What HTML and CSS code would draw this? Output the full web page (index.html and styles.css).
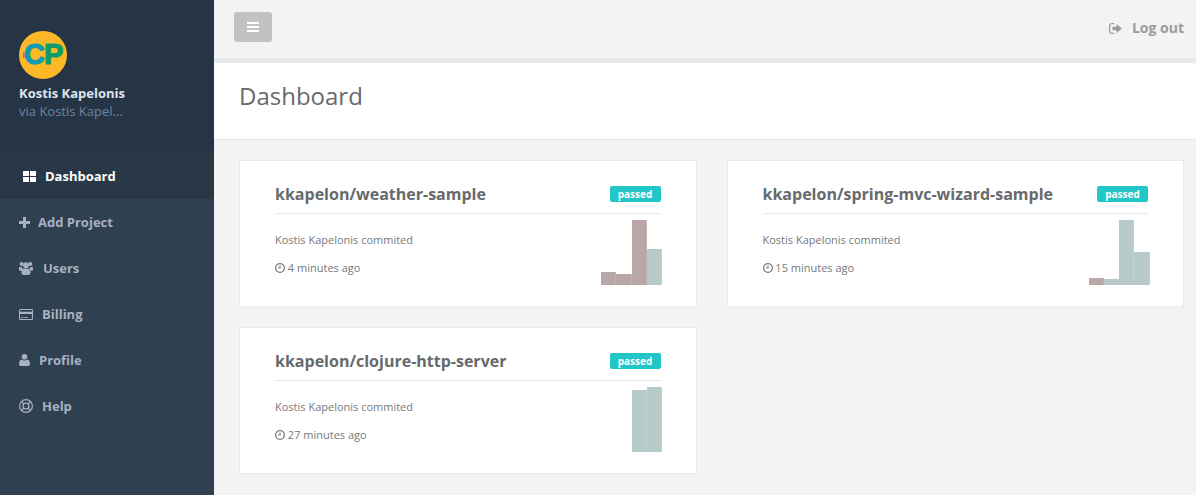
FILE: index.html
```html
<!DOCTYPE html>
<html lang="en">
<head>
    <meta charset="UTF-8">
    <title>Dashboard</title>
    <link rel="stylesheet" href="styles.css">
</head>
<body>
    <nav class="sidebar">
        <div class="profile">
            <svg class="avatar" viewBox="0 0 48 48" width="48" height="48">
                <circle cx="24" cy="24" r="24" fill="#fdb827"/>
                <rect x="4" y="21" width="3" height="6" fill="#e8683a"/>
                <text class="avatar-c" x="5" y="33" fill="#0f9bb0">C</text>
                <text class="avatar-p" x="25" y="33" fill="#0f9b6b">P</text>
            </svg>
            <div class="profile-name">Kostis Kapelonis</div>
            <div class="profile-via">via Kostis Kapel...</div>
        </div>
        <ul class="nav">
            <li class="nav-item active">
                <svg class="icon icon-dash" viewBox="0 0 13 11"><path d="M0 .5Q0 0 .5 0H6v5H0zM7 0h5.500q.5 0 .5.5V5H7zM0 6h6v5H.5Q0 11 0 10.500zM7 6h6v4.500q0 .5-.5.5H7z"/></svg>
                Dashboard
            </li>
            <li class="nav-item">
                <svg class="icon icon-plus" viewBox="0 0 11 11"><path d="M4 0h3v4h4v3H7v4H4V7H0V4h4z"/></svg>
                Add Project
            </li>
            <li class="nav-item">
                <svg class="icon icon-users" viewBox="0 0 14 13"><circle cx="2.600" cy="2" r="2"/><circle cx="11.400" cy="2" r="2"/><circle cx="7" cy="3.200" r="2.900"/><path d="M0 5h2.800l1 2.800-.7 1H.8Q0 8.800 0 7.800zM14 5h-2.800l-1 2.800.7 1h2.300q.8 0 .8-1zM4.200 6.500h5.600q1.800.5 1.800 3.800 0 2.700-1.800 2.700H4.200q-1.800 0-1.800-2.700 0-3.300 1.800-3.800z"/></svg>
                Users
            </li>
            <li class="nav-item">
                <svg class="icon icon-card" viewBox="0 0 14 11"><path fill-rule="evenodd" d="M1.200 0h11.600Q14 0 14 1.200v8.600Q14 11 12.800 11H1.200Q0 11 0 9.800V1.200Q0 0 1.200 0zM1.100 1.100v1.700h11.800V1.100zM1.100 5v4.900h11.800V5zM2.200 7.900h2.200v1H2.200zM5.400 7.900h3.200v1H5.400z"/></svg>
                Billing
            </li>
            <li class="nav-item">
                <svg class="icon icon-user" viewBox="0 0 11 12"><circle cx="5.500" cy="2.800" r="2.800"/><path d="M2.500 5.600q3 1.800 6 0 2.500.8 2.500 4.600 0 1.800-1.800 1.800H1.800Q0 12 0 10.200 0 6.400 2.500 5.600z"/></svg>
                Profile
            </li>
            <li class="nav-item">
                <svg class="icon icon-help" viewBox="0 0 14 14"><path fill-rule="evenodd" d="M7 0a7 7 0 1 1 0 14A7 7 0 0 1 7 0zM7 1.200a5.800 5.800 0 1 0 0 11.600A5.800 5.800 0 0 0 7 1.200zM7 3.400a3.600 3.600 0 1 1 0 7.200 3.600 3.600 0 0 1 0-7.200zM7 4.700a2.300 2.300 0 1 0 0 4.600 2.300 2.300 0 0 0 0-4.600z"/><path d="M2.300 3.200 3.200 2.300 5.300 4.400 4.400 5.300zM10.800 2.300 11.700 3.200 9.600 5.300 8.700 4.400zM2.300 10.800 4.400 8.700 5.300 9.600 3.200 11.700zM9.600 8.700 11.700 10.800 10.800 11.700 8.700 9.600z"/></svg>
                Help
            </li>
        </ul>
    </nav>

    <div class="main">
        <header class="topbar">
            <button class="menu-btn" type="button">
                <svg viewBox="0 0 12 10" width="12" height="10"><path d="M0 0h12v2H0zM0 4h12v2H0zM0 8h12v2H0z"/></svg>
            </button>
            <a class="logout">
                <svg viewBox="0 0 13 11" width="13" height="11"><path d="M3.500 0H5v1.200H2.500q-1.300 0-1.300 1.300v6q0 1.300 1.300 1.300H5V11H3Q0 11 0 8.500v-6Q0 0 3.500 0zM7.500 1 13 5.500l-5.500 4.500V7.300H3.500V3.700h4z"/></svg>
                Log out
            </a>
        </header>

        <div class="page-title">
            <h1>Dashboard</h1>
        </div>

        <div class="projects">
            <section class="card">
                <div class="card-head">
                    <h2>kkapelon/weather-sample</h2>
                    <span class="badge">passed</span>
                </div>
                <div class="card-body">
                    <div class="card-info">
                        <p>Kostis Kapelonis commited</p>
                        <p class="time"><svg viewBox="0 0 10 10" width="10" height="10"><path fill-rule="evenodd" d="M5 0a5 5 0 1 1 0 10A5 5 0 0 1 5 0zM5 1.300a3.700 3.700 0 1 0 0 7.400 3.700 3.700 0 0 0 0-7.400zM4.500 2.500h1.100v3H3V4.500h1.500z"/></svg> 4 minutes ago</p>
                    </div>
                    <div class="chart">
                        <span class="bar fail" style="height: 13px"></span>
                        <span class="bar fail" style="height: 11px"></span>
                        <span class="bar fail" style="height: 65px"></span>
                        <span class="bar pass" style="height: 36px"></span>
                    </div>
                </div>
            </section>

            <section class="card">
                <div class="card-head">
                    <h2>kkapelon/spring-mvc-wizard-sample</h2>
                    <span class="badge">passed</span>
                </div>
                <div class="card-body">
                    <div class="card-info">
                        <p>Kostis Kapelonis commited</p>
                        <p class="time"><svg viewBox="0 0 10 10" width="10" height="10"><path fill-rule="evenodd" d="M5 0a5 5 0 1 1 0 10A5 5 0 0 1 5 0zM5 1.300a3.700 3.700 0 1 0 0 7.400 3.700 3.700 0 0 0 0-7.400zM4.500 2.500h1.100v3H3V4.500h1.500z"/></svg> 15 minutes ago</p>
                    </div>
                    <div class="chart">
                        <span class="bar fail" style="height: 7px"></span>
                        <span class="bar pass" style="height: 6px"></span>
                        <span class="bar pass" style="height: 65px"></span>
                        <span class="bar pass" style="height: 33px"></span>
                    </div>
                </div>
            </section>

            <section class="card">
                <div class="card-head">
                    <h2>kkapelon/clojure-http-server</h2>
                    <span class="badge">passed</span>
                </div>
                <div class="card-body">
                    <div class="card-info">
                        <p>Kostis Kapelonis commited</p>
                        <p class="time"><svg viewBox="0 0 10 10" width="10" height="10"><path fill-rule="evenodd" d="M5 0a5 5 0 1 1 0 10A5 5 0 0 1 5 0zM5 1.300a3.700 3.700 0 1 0 0 7.400 3.700 3.700 0 0 0 0-7.400zM4.500 2.500h1.100v3H3V4.500h1.500z"/></svg> 27 minutes ago</p>
                    </div>
                    <div class="chart">
                        <span class="bar pass" style="height: 62px"></span>
                        <span class="bar pass" style="height: 65px"></span>
                    </div>
                </div>
            </section>
        </div>
    </div>
</body>
</html>
```

FILE: styles.css
```css
/* Basic Styling */
* {
    box-sizing: border-box;
}

html, body {
    height: 100%;
}

body {
    margin: 0;
    display: flex;
    overflow: hidden;
    font-family: "Open Sans", Arial, sans-serif;
    font-size: 13px;
    color: #676a6c;
    background-color: #f3f3f4;
}

/* Sidebar */
.sidebar {
    width: 214px;
    flex-shrink: 0;
    background-color: #2f4050;
}

.profile {
    height: 153px;
    padding: 31px 19px 0;
    background-color: #253545;
}

.avatar {
    display: block;
}

.avatar-c, .avatar-p {
    font-family: "Liberation Sans", Arial, sans-serif;
    font-size: 29px;
    font-weight: bold;
    stroke-width: 1.2;
}

.avatar-c {
    stroke: #0f9bb0;
}

.avatar-p {
    stroke: #0f9b6b;
}

.profile-name {
    margin-top: 5px;
    font-size: 13px;
    line-height: 18px;
    font-weight: 700;
    color: #dfe4ed;
}

.profile-via {
    font-size: 13px;
    line-height: 18px;
    color: #6f84a0;
}

.nav {
    list-style: none;
    margin: 0;
    padding: 0;
}

.nav-item {
    display: flex;
    align-items: center;
    height: 46px;
    padding-left: 19px;
    font-size: 13px;
    font-weight: 700;
    color: #a7b1c2;
}

.nav-item.active {
    padding-left: 23px;
    color: #fff;
    background-color: #293846;
}

.icon {
    flex-shrink: 0;
    fill: currentColor;
}

.icon-dash {
    width: 13px;
    height: 11px;
    margin-right: 9px;
}

.icon-plus {
    width: 11px;
    height: 11px;
    margin-right: 8px;
}

.icon-users {
    width: 14px;
    height: 13px;
    margin-right: 10px;
}

.icon-card {
    width: 14px;
    height: 11px;
    margin-right: 9px;
}

.icon-user {
    width: 11px;
    height: 12px;
    margin-right: 9px;
}

.icon-help {
    width: 14px;
    height: 14px;
    margin-right: 9px;
}

/* Main area */
.main {
    flex: 1;
    min-width: 0;
}

.topbar {
    display: flex;
    justify-content: space-between;
    align-items: flex-start;
    height: 63px;
    padding: 12px 12px 0 20px;
    background-color: #f3f3f3;
    border-bottom: 5px solid #e7eaec;
}

.menu-btn {
    display: flex;
    align-items: center;
    justify-content: center;
    width: 38px;
    height: 30px;
    padding: 0;
    border: none;
    border-radius: 3px;
    background-color: #c2c2c2;
    fill: #fff;
}

.logout {
    display: flex;
    align-items: center;
    gap: 10px;
    margin-top: 7px;
    font-size: 14px;
    line-height: 18px;
    font-weight: 700;
    color: #999c9e;
    fill: #999c9e;
}

.page-title {
    height: 77px;
    padding: 0 25px;
    background-color: #fff;
    border-bottom: 1px solid #e7eaec;
}

.page-title h1 {
    margin: 0;
    font-size: 24px;
    line-height: 66px;
    font-weight: 400;
    color: #676a6c;
}

.projects {
    display: grid;
    grid-template-columns: 1fr 1fr;
    grid-auto-rows: 147px;
    gap: 20px 30px;
    padding: 20px 12px 20px 25px;
}

.card {
    padding: 0 35px;
    background-color: #fff;
    border: 1px solid #e7eaec;
}

.card-head {
    display: flex;
    justify-content: space-between;
    align-items: center;
    height: 53px;
    padding-top: 14px;
    border-bottom: 1px solid #e7eaec;
}

.card-head h2 {
    margin: 0;
    font-size: 16px;
    font-weight: 700;
    color: #676a6c;
}

.badge {
    width: 51px;
    height: 16px;
    border-radius: 2px;
    background-color: #23c6c8;
    color: #fff;
    font-size: 10px;
    line-height: 17px;
    font-weight: 700;
    text-align: center;
}

.card-body {
    display: flex;
    justify-content: space-between;
    align-items: flex-start;
}

.card-info p {
    margin: 0;
    font-size: 11px;
    line-height: 16px;
    color: #767a7c;
}

.card-info p:first-child {
    margin-top: 18px;
}

.card-info .time {
    margin-top: 12px;
}

.time svg {
    fill: #767a7c;
    vertical-align: -1px;
}

.chart {
    display: flex;
    align-items: flex-end;
    height: 65px;
    margin: 6px -1.500px 0 0;
}

.bar {
    display: block;
    width: 15.250px;
    box-shadow: inset -1px 0 rgba(255, 255, 255, 0.15);
}

.bar.fail {
    background-color: #b9a6a6;
}

.bar.pass {
    background-color: #b7caca;
}
```
